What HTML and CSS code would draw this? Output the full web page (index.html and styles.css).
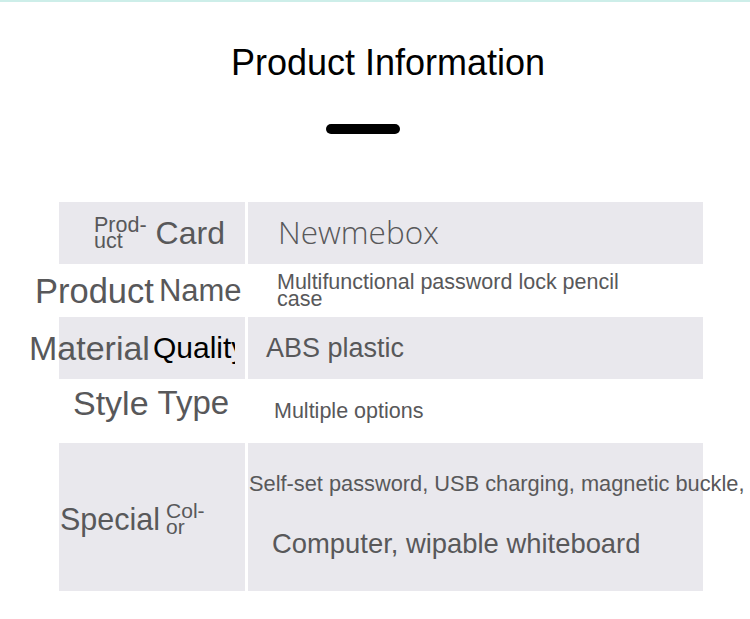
FILE: index.html
```html
<!DOCTYPE html>
<html>
<head>
<meta charset="utf-8">
<link rel="stylesheet" href="styles.css">
</head>
<body>
<div class="page">
  <div class="topline"></div>
  <h1 class="title">Product Information</h1>
  <div class="bar"></div>
  <div class="table">
    <div class="row row-1 shaded">
      <div class="key"><span class="small">Prod-<br>uct</span><span class="big">Card</span></div>
      <div class="val"><span class="brand">Newmebox</span></div>
    </div>
    <div class="row row-2">
      <div class="key"><span class="big first">Product</span><span class="big">Name</span></div>
      <div class="val"><span class="name">Multifunctional password lock pencil<br>case</span></div>
    </div>
    <div class="row row-3 shaded">
      <div class="key"><span class="big first">Material</span><span class="big black clip">Quality</span></div>
      <div class="val"><span class="abs">ABS plastic</span></div>
    </div>
    <div class="row row-4">
      <div class="key"><span class="big first">Style</span><span class="big">Type</span></div>
      <div class="val"><span class="opts">Multiple options</span></div>
    </div>
    <div class="row row-5 shaded">
      <div class="key"><span class="big first">Special</span><span class="small">Col-<br>or</span></div>
      <div class="val col"><span class="feat">Self-set password, USB charging, magnetic buckle,</span><span class="feat2">Computer, wipable whiteboard</span></div>
    </div>
  </div>
</div>
</body>
</html>
```

FILE: styles.css
```css
*, *::before, *::after {
  box-sizing: border-box;
}
html, body {
  margin: 0;
  padding: 0;
  background: #ffffff;
}
.page {
  width: 750px;
  height: 619px;
  overflow: hidden;
  font-family: "Liberation Sans", Arial, sans-serif;
  color: #58585a;
}
.topline {
  height: 2px;
  background: #cdeee9;
}
.title {
  margin: 0;
  padding: 41px 0 0 26px;
  height: 81px;
  line-height: 40px;
  font-size: 36px;
  font-weight: 400;
  text-align: center;
  color: #000;
}
.bar {
  margin: 41px 0 0 326px;
  width: 74px;
  height: 10px;
  border-radius: 5px;
  background: #000;
}
.table {
  margin: 68px 0 0 59px;
  width: 644px;
  display: flex;
  flex-direction: column;
}
.row {
  display: flex;
  gap: 3px;
}
.row-1 { height: 62px; }
.row-2 { height: 53px; }
.row-3 { height: 62px; }
.row-4 { height: 64px; }
.row-5 { height: 148px; }
.key {
  width: 186px;
  min-width: 0;
  flex: none;
  display: flex;
  align-items: center;
  white-space: nowrap;
}
.val {
  width: 455px;
  min-width: 0;
  flex: none;
  display: flex;
  align-items: center;
  white-space: nowrap;
}
.shaded .key, .shaded .val {
  background: #e9e8ed;
}
.big {
  font-size: 32px;
  line-height: 36px;
}
.small {
  font-size: 21.5px;
  line-height: 16px;
  margin-right: 10px;
}
.black { color: #000; }
.clip {
  display: inline-block;
  flex: none;
  width: 82px;
  overflow: hidden;
}
.row-1 .key { padding-left: 35px; }
.row-1 .small { margin-right: 9px; }
.row-2 .first { font-size: 34.5px; margin-left: -24px; margin-right: 5px; }
.row-2 .key .big:last-child { font-size: 31px; }
.row-3 .first { font-size: 34px; margin-left: -30px; margin-right: 3px; }
.row-3 .key .big:last-child { font-size: 30px; }
.row-4 .key { padding-left: 14px; padding-bottom: 16px; }
.row-4 .first { font-size: 34px; margin-right: 9px; }
.row-4 .key .big:last-child { font-size: 33px; }
.row-5 .key { padding-left: 1px; padding-top: 4px; }
.row-5 .first { font-size: 30.5px; margin-right: 6px; }
.row-5 .small { font-size: 21px; }
.brand {
  font-family: "Open Sans", sans-serif;
  font-weight: 300;
  font-size: 31.5px;
  padding-left: 30px;
  padding-bottom: 4px;
}
.name {
  font-size: 21.5px;
  line-height: 17px;
  padding-left: 29px;
}
.abs {
  font-size: 27px;
  padding-left: 18px;
}
.opts {
  font-size: 21.5px;
  padding-left: 26px;
}
.val.col {
  flex-direction: column;
  align-items: flex-start;
  justify-content: flex-start;
  overflow: visible;
}
.feat {
  font-size: 21.8px;
  line-height: 24px;
  margin-top: 29px;
  padding-left: 1px;
}
.feat2 {
  font-size: 27.4px;
  line-height: 32px;
  margin-top: 32px;
  padding-left: 24px;
}
```
